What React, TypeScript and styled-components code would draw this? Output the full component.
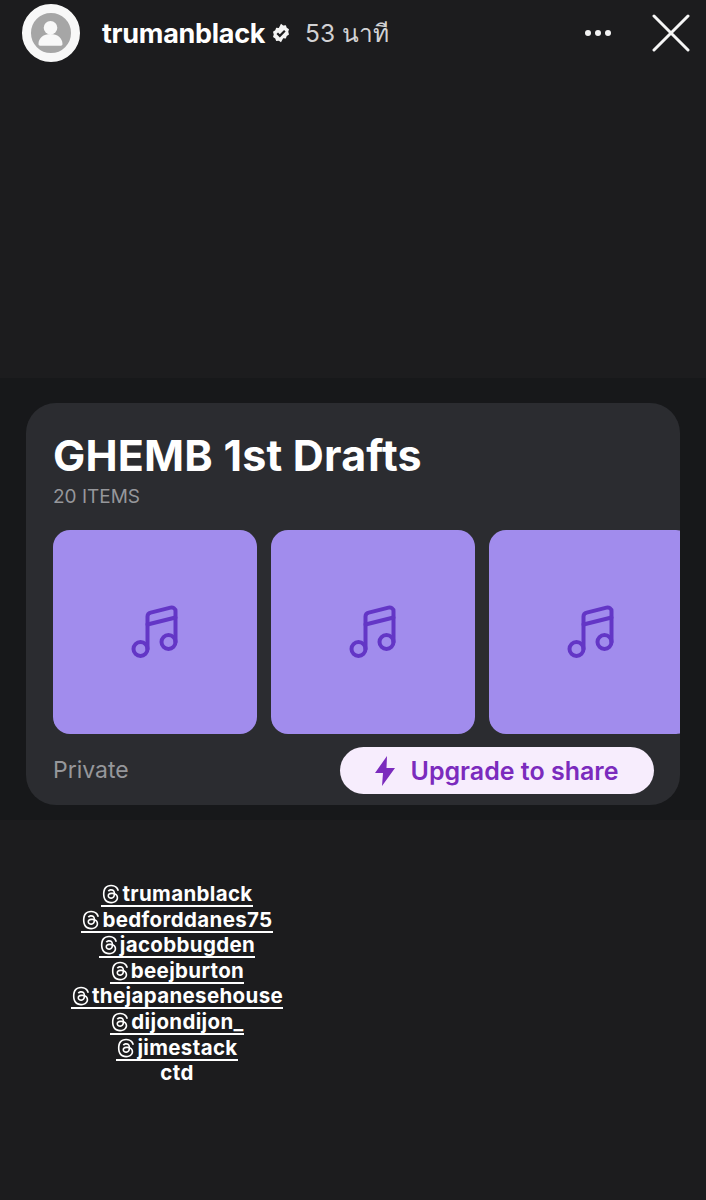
import React from 'react';
import styled, { createGlobalStyle } from 'styled-components';
import { FaThreads } from 'react-icons/fa6';

const GlobalStyle = createGlobalStyle`
  html, body {
    margin: 0;
    padding: 0;
    background: #1c1c1e;
  }
`;

const Page = styled.div`
  background: #1c1c1e;
  color: white;
  display: flex;
  flex-flow: column;
  font-family: Inter, 'Noto Sans', sans-serif;
  height: 1200px;
  overflow: hidden;
  width: 706px;
`;

const Header = styled.header`
  align-items: center;
  display: flex;
  flex: 0 0 66px;
  padding: 0 16px 0 22px;
`;

const Avatar = styled.div`
  align-items: center;
  background: #a6a6a6;
  border: 9px solid #f8f8f8;
  border-radius: 50%;
  box-sizing: border-box;
  display: flex;
  flex: 0 0 58px;
  height: 58px;
  justify-content: center;
  overflow: hidden;
`;

const Name = styled.span`
  font-size: 27px;
  font-weight: 700;
  letter-spacing: -0.3px;
  margin-left: 22px;
`;

const Verified = styled.svg`
  flex: 0 0 20px;
  height: 20px;
  margin-left: 6px;
  width: 20px;
`;

const Age = styled.span`
  color: #d2d2d4;
  flex: 1;
  font-size: 24.5px;
  margin-left: 14px;
`;

const Dots = styled.div`
  display: flex;
  gap: 4px;
  margin-right: 41px;
`;

const Dot = styled.span`
  background: #f2f2f2;
  border-radius: 50%;
  height: 6px;
  width: 6px;
`;

const Band = styled.section`
  background: #17181a;
  box-sizing: border-box;
  display: flex;
  flex: 0 0 442px;
  margin-top: 312px;
  padding: 25px 26px 15px;
`;

const Card = styled.div`
  background: #2b2c30;
  border-radius: 30px;
  box-sizing: border-box;
  display: flex;
  flex-flow: column;
  height: 402px;
  overflow: hidden;
  padding: 24px 0 0 27px;
  width: 654px;
`;

const Title = styled.h1`
  font-size: 43px;
  font-weight: 700;
  letter-spacing: 0.2px;
  line-height: 56px;
  margin: 0;
`;

const Count = styled.div`
  color: #96979b;
  font-size: 19px;
  line-height: 24px;
  margin-top: 2px;
`;

const Tiles = styled.div`
  display: flex;
  gap: 14px;
  margin-top: 21px;
`;

const Tile = styled.div`
  align-items: center;
  background: #a18ced;
  border-radius: 17px;
  display: flex;
  flex: 0 0 204px;
  height: 204px;
  justify-content: center;
`;

const Footer = styled.div`
  align-items: center;
  display: flex;
  justify-content: space-between;
  margin-top: 13px;
  padding-right: 26px;
`;

const Privacy = styled.span`
  color: #96979b;
  font-size: 23px;
  margin-top: -2px;
`;

const Upgrade = styled.div`
  align-items: center;
  background: #f7edfd;
  border-radius: 24px;
  color: #7b2bbd;
  display: flex;
  font-size: 25px;
  font-weight: 600;
  gap: 15px;
  height: 47px;
  justify-content: center;
  width: 314px;
`;

const Caption = styled.div`
  align-items: center;
  display: flex;
  flex-flow: column;
  margin-top: 63px;
  width: 354px;
`;

const Mention = styled.span`
  align-items: center;
  border-bottom: 2px solid white;
  display: flex;
  font-size: 20.500px;
  font-weight: 700;
  gap: 1px;
  height: 22px;
  letter-spacing: 0.35px;
  line-height: 22px;
  margin-bottom: 1.600px;
`;

const Plain = styled(Mention)`
  border-bottom: 0;
`;

const MusicNote = () => (
  <svg width="50" height="56" viewBox="0 0 50 56" fill="none" stroke="#6336c6" strokeWidth="4" strokeLinejoin="round" strokeLinecap="round">
    <circle cx="10.500" cy="45" r="7" />
    <circle cx="38.500" cy="38" r="7" />
    <path d="M17.500 45V12.500c0-2 1.200-3.400 3.200-3.900L40.500 3.600c2.400-.6 5 .8 5 3.600V38" />
    <path d="M17.500 20.500 45.500 13.500" />
  </svg>
);

const handles = [
  'trumanblack',
  'bedforddanes75',
  'jacobbugden',
  'beejburton',
  'thejapanesehouse',
  'dijondijon_',
  'jimestack',
];

export default function App() {
  return (
    <Page>
      <GlobalStyle />
      <Header>
        <Avatar>
          <svg width="40" height="40" viewBox="0 0 40 40" fill="#f8f8f8">
            <circle cx="19.500" cy="14.700" r="6.800" />
            <path d="M7.500 31c0-6 5-10 12-10s12 4 12 10c0 1-.6 1.700-1.600 1.700H9.100c-1 0-1.600-.7-1.600-1.700z" />
          </svg>
        </Avatar>
        <Name>trumanblack</Name>
        <Verified viewBox="0 0 24 24">
          <path
            fill="#f4f4f4"
            d="M12 1l2.600 1.900 3.200-.2 1.100 3 2.700 1.800-.9 3.100.9 3.100-2.700 1.800-1.100 3-3.200-.2L12 23l-2.600-1.600-3.200.2-1.100-3-2.700-1.800.9-3.100-.9-3.100 2.700-1.800 1.100-3 3.200.2z"
          />
          <path d="M7.500 12.300l3.100 3.100 6-6.200" fill="none" stroke="#1c1c1e" strokeWidth="2.600" />
        </Verified>
        <Age>53 นาที</Age>
        <Dots>
          <Dot />
          <Dot />
          <Dot />
        </Dots>
        <svg width="38" height="38" viewBox="0 0 38 38" stroke="#f6f6f6" strokeWidth="3" strokeLinecap="round">
          <path d="M2 2 36 36M36 2 2 36" />
        </svg>
      </Header>
      <Band>
        <Card>
          <Title>GHEMB 1st Drafts</Title>
          <Count>20 ITEMS</Count>
          <Tiles>
            <Tile>
              <MusicNote />
            </Tile>
            <Tile>
              <MusicNote />
            </Tile>
            <Tile>
              <MusicNote />
            </Tile>
          </Tiles>
          <Footer>
            <Privacy>Private</Privacy>
            <Upgrade>
              <svg width="20" height="30" viewBox="0 0 20 30" fill="#7b2bbd">
                <path d="M12 0 0 17h8l-1 13 13-18h-8.500z" />
              </svg>
              Upgrade to share
            </Upgrade>
          </Footer>
        </Card>
      </Band>
      <Caption>
        {handles.map((handle) => (
          <Mention key={handle}>
            <FaThreads size={20} />
            {handle}
          </Mention>
        ))}
        <Plain>ctd</Plain>
      </Caption>
    </Page>
  );
}
